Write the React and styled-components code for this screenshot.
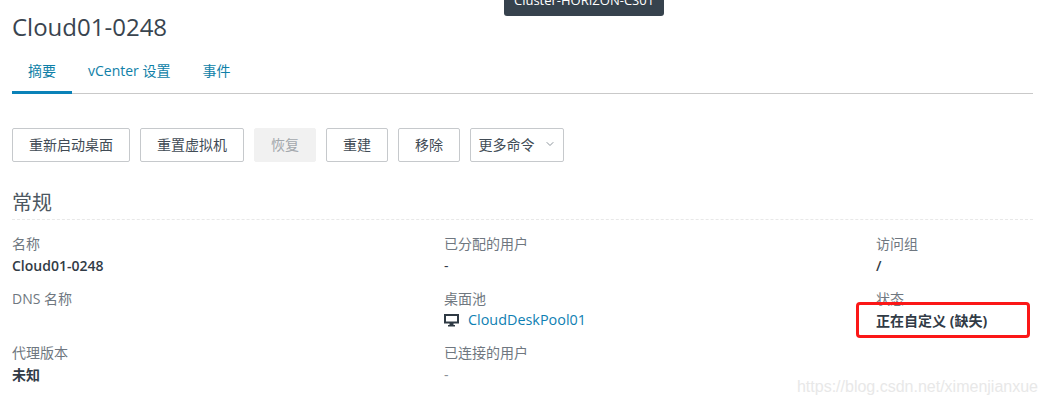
import React from 'react';
import styled, { createGlobalStyle } from 'styled-components';
import { ChevronDown } from 'lucide-react';

const GlobalStyle = createGlobalStyle`
  html, body {
    margin: 0;
    padding: 0;
    background: #fff;
  }
  body {
    font-family: "Open Sans", "Noto Sans CJK SC", sans-serif;
    color: #3b4550;
  }
`;

const PageUI = styled.div`
  position: relative;
  width: 1047px;
  height: 405px;
  overflow: hidden;
  padding: 11px 0 0 12px;
  box-sizing: border-box;
`;

const TooltipUI = styled.div`
  position: absolute;
  left: 504px;
  top: -10px;
  width: 160px;
  height: 26px;
  background: #36424d;
  border-radius: 0 0 3px 3px;
  color: #fff;
  font-size: 13px;
  line-height: 20px;
  text-align: center;
`;

const TitleUI = styled.h1`
  margin: 0;
  font-size: 24px;
  font-weight: 400;
  line-height: 32px;
  color: #39444f;
`;

const TabsUI = styled.div`
  display: flex;
  width: 1021px;
  height: 50px;
  border-bottom: 1px solid #c9c9c9;
`;

const TabUI = styled.a`
  display: flex;
  align-items: center;
  box-sizing: border-box;
  height: 51px;
  padding: 5px 16px 0;
  font-size: 14px;
  color: #0f7fa8;
  border-bottom: 3px solid ${p => (p.$active ? '#0a82b8' : 'transparent')};
`;

const ToolbarUI = styled.div`
  display: flex;
  gap: 10px;
  margin-top: 34px;
`;

const ButtonUI = styled.button`
  display: flex;
  align-items: center;
  justify-content: center;
  gap: 9px;
  box-sizing: border-box;
  width: ${p => p.$width}px;
  height: 34px;
  padding: 0 0 2px;
  font-family: inherit;
  font-size: 14px;
  color: ${p => (p.disabled ? '#a3a8ad' : '#414b55')};
  background: ${p => (p.disabled ? '#f1f1f1' : '#fff')};
  border: 1px solid ${p => (p.disabled ? '#f1f1f1' : '#c6c9cc')};
  border-radius: 2px;
`;

const SectionUI = styled.h2`
  margin: 25px 0 0;
  width: 1021px;
  height: 32px;
  font-size: 20px;
  font-weight: 400;
  line-height: 32px;
  color: #4c5761;
  border-bottom: 1px dashed #e8e8e8;
`;

const GridUI = styled.div`
  display: grid;
  grid-template-columns: repeat(3, 432px);
  grid-auto-rows: 54.5px;
  margin-top: 15px;
`;

const FieldUI = styled.div`
  display: flex;
  flex-direction: column;
`;

const LabelUI = styled.div`
  height: 20px;
  font-size: 14px;
  line-height: 18px;
  color: #6f7780;
`;

const ValueUI = styled.div`
  display: flex;
  align-items: center;
  gap: 9px;
  height: 20px;
  font-size: 14px;
  font-weight: ${p => p.$weight};
  color: ${p => (p.$muted ? '#8a9097' : '#313b46')};
`;

const LinkUI = styled.a`
  font-size: 14.4px;
  font-weight: 400;
  color: #0f7fb3;
`;

const HighlightUI = styled.div`
  position: absolute;
  left: 856px;
  top: 302px;
  width: 174px;
  height: 36px;
  box-sizing: border-box;
  border: 3px solid #fb1717;
  border-radius: 4px;
`;

const WatermarkUI = styled.div`
  position: absolute;
  right: 9px;
  top: 377px;
  font-family: "Liberation Sans", sans-serif;
  font-size: 16px;
  line-height: 20px;
  color: #e8e8e8;
`;

const MonitorIcon = () => (
  <svg width="15" height="14" viewBox="0 0 15 14">
    <path fill="#2f3a44" fillRule="evenodd" d="M0 1h15v9.5H9.5V12H11v1.5H4V12h1.5v-1.5H0V1zm2 2v5.5h11V3H2z" />
  </svg>
);

const fields = [
  { label: '名称', value: 'Cloud01-0248', weight: 600 },
  { label: '已分配的用户', value: '-', weight: 400 },
  { label: '访问组', value: '/', weight: 600 },
  { label: 'DNS 名称' },
  { label: '桌面池', link: 'CloudDeskPool01' },
  { label: '状态', value: '正在自定义 (缺失)', weight: 700 },
  { label: '代理版本', value: '未知', weight: 700 },
  { label: '已连接的用户', value: '-', weight: 400, muted: true },
];

export default function App() {
  return (
    <PageUI>
      <GlobalStyle />
      <TooltipUI>Cluster-HORIZON-CS01</TooltipUI>
      <TitleUI>Cloud01-0248</TitleUI>
      <TabsUI>
        <TabUI $active>摘要</TabUI>
        <TabUI>vCenter 设置</TabUI>
        <TabUI>事件</TabUI>
      </TabsUI>
      <ToolbarUI>
        <ButtonUI $width={118}>重新启动桌面</ButtonUI>
        <ButtonUI $width={104}>重置虚拟机</ButtonUI>
        <ButtonUI $width={62} disabled>恢复</ButtonUI>
        <ButtonUI $width={62}>重建</ButtonUI>
        <ButtonUI $width={62}>移除</ButtonUI>
        <ButtonUI $width={94}>
          更多命令
          <ChevronDown size={12} color="#8d959c" />
        </ButtonUI>
      </ToolbarUI>
      <SectionUI>常规</SectionUI>
      <GridUI>
        {fields.map(f => (
          <FieldUI key={f.label}>
            <LabelUI>{f.label}</LabelUI>
            <ValueUI $weight={f.weight} $muted={f.muted}>
              {f.link && <MonitorIcon />}
              {f.link ? <LinkUI>{f.link}</LinkUI> : f.value}
            </ValueUI>
          </FieldUI>
        ))}
      </GridUI>
      <HighlightUI />
      <WatermarkUI>https://blog.csdn.net/ximenjianxue</WatermarkUI>
    </PageUI>
  );
}
